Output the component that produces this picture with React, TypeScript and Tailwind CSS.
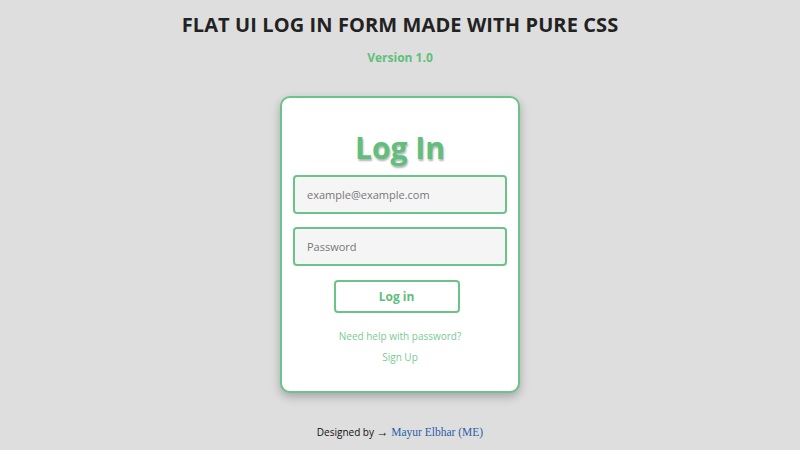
export default function App() {
  const font = { fontFamily: '"Open Sans", "Noto Sans", sans-serif' };
  return (
    <div className="min-h-[450px] w-full bg-[#dedede] flex flex-col items-center" style={font}>
      <h1 className="mt-[9px] text-[20px] leading-[32px] font-bold text-[#222] tracking-[0.1px]">
        FLAT UI LOG IN FORM MADE WITH PURE CSS
      </h1>
      <p className="mt-[9px] text-[12px] leading-[16px] font-bold text-[#5fbf7c]">Version 1.0</p>

      <div className="mt-[30px] w-[240px] h-[297px] bg-white border-2 border-[#6cc389] rounded-[10px] shadow-[0_4px_10px_rgba(0,0,0,0.25)] flex flex-col items-center px-[11px]">
        <h2 className="mt-[30px] text-[30px] leading-[40px] font-bold text-[#5fbf7c] [text-shadow:1px_2px_2px_rgba(0,0,0,0.3)]">
          Log In
        </h2>
        <input
          placeholder="example@example.com"
          className="mt-[7px] w-full h-[39px] bg-[#f5f5f5] border-2 border-[#6cc389] rounded-[4px] px-[12px] text-[11px] text-[#555] placeholder:text-[#777] outline-none"
        />
        <input
          type="password"
          placeholder="Password"
          className="mt-[13px] w-full h-[39px] bg-[#f5f5f5] border-2 border-[#6cc389] rounded-[4px] px-[12px] text-[11px] text-[#555] placeholder:text-[#777] outline-none"
        />
        <button className="mt-[14px] mr-[7px] w-[126px] h-[33px] bg-white border-2 border-[#6cc389] rounded-[4px] text-[12px] font-bold text-[#5fbf7c]">
          Log in
        </button>
        <a className="mt-[16px] text-[10px] leading-[14px] text-[#7acb93]">Need help with password?</a>
        <a className="mt-[7px] text-[10px] leading-[14px] text-[#7acb93]">Sign Up</a>
      </div>

      <p className="mt-[30px] text-[10px] text-[#111]">
        Designed by <span className="text-[12px]">→</span>{' '}
        <span className="text-[11.5px] text-[#2a5ea8]" style={{ fontFamily: '"Liberation Serif", serif' }}>
          Mayur Elbhar (ME)
        </span>
      </p>
    </div>
  );
}
